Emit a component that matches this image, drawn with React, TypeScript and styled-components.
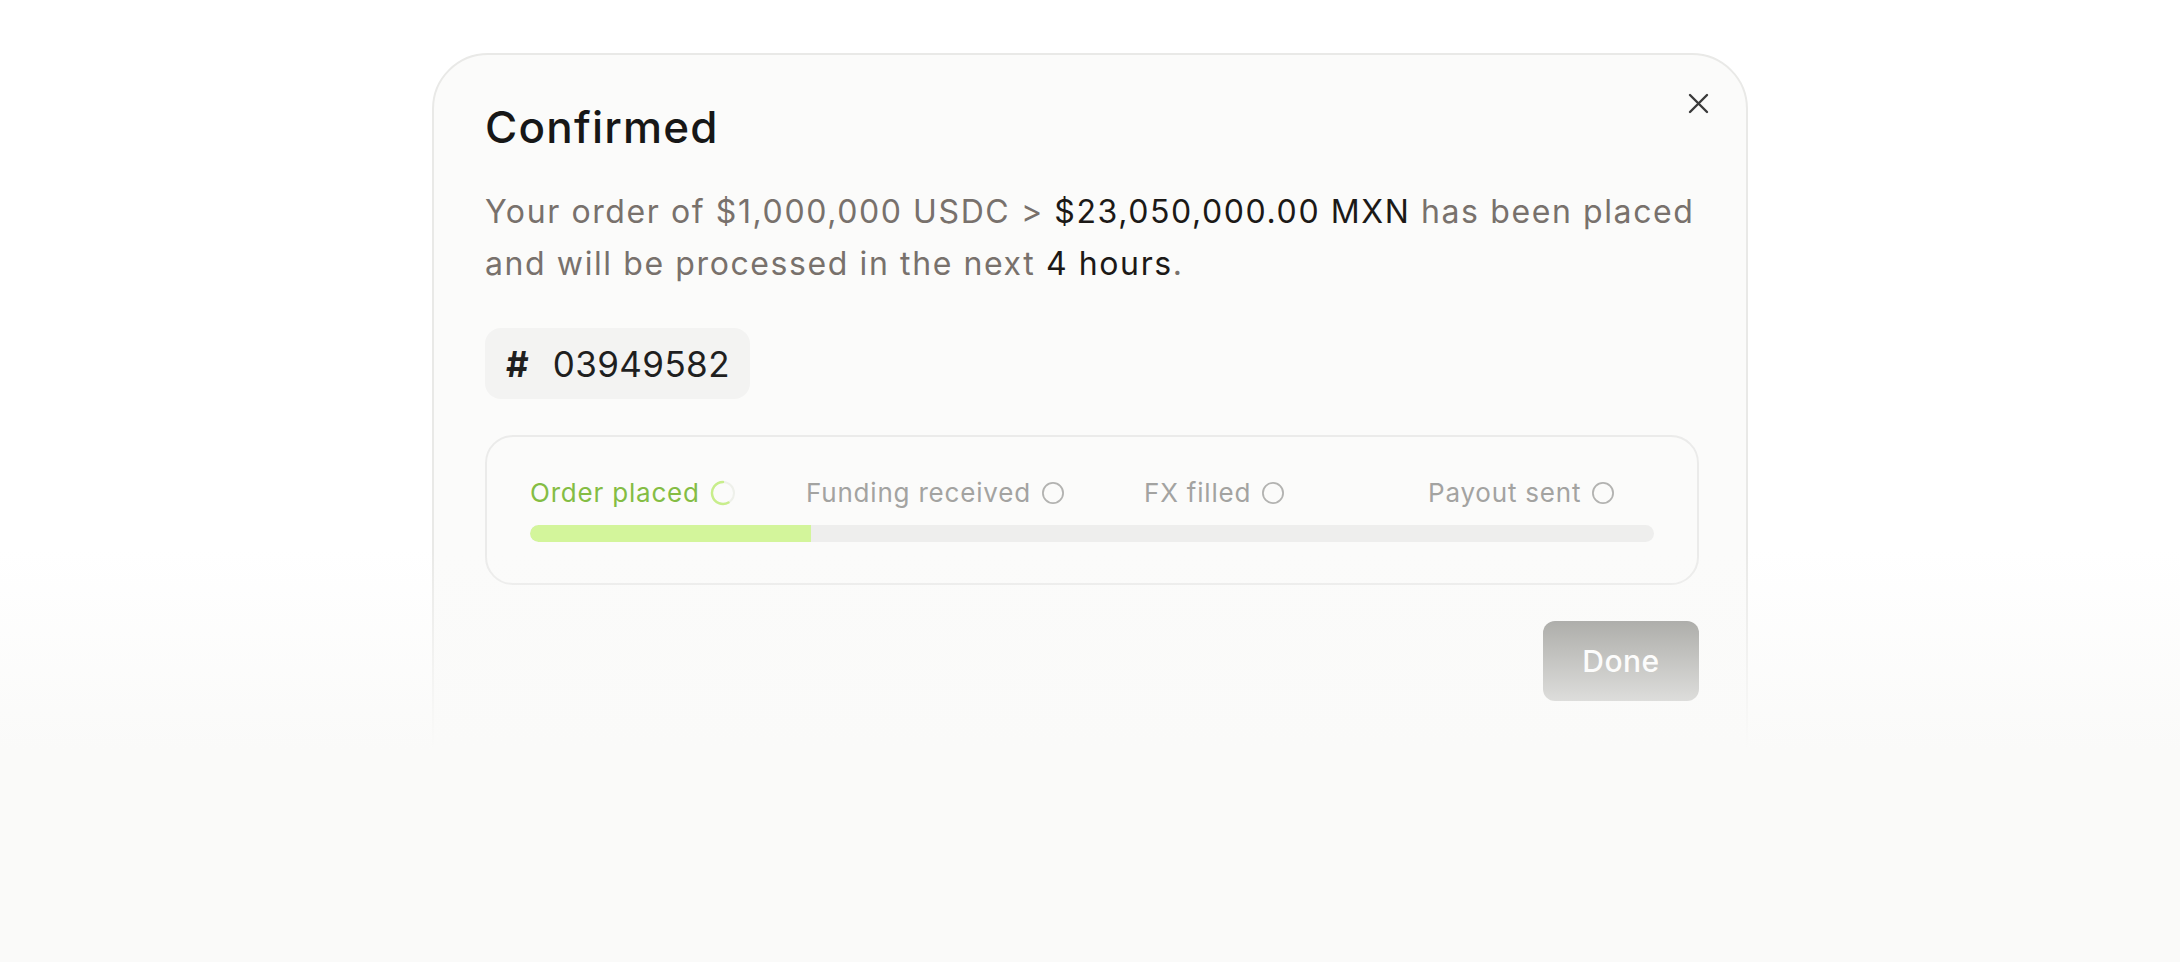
import styled, { createGlobalStyle } from "styled-components";

const GlobalStyle = createGlobalStyle`
  html, body {
    margin: 0;
    padding: 0;
    background: #ffffff;
  }
  body {
    font-family: Inter, "Noto Sans", sans-serif;
    -webkit-font-smoothing: antialiased;
  }
`;

const Page = styled.div`
  position: relative;
  height: 962px;
  overflow: hidden;
  padding-top: 53px;
  box-sizing: border-box;
`;

const Card = styled.div`
  position: relative;
  box-sizing: border-box;
  width: 1316px;
  margin: 0 auto;
  padding: 46px 47px 122px 51px;
  border: 2px solid #e9e9e7;
  border-radius: 56px;
  background: #fbfbfa;
  display: flex;
  flex-direction: column;
  gap: 36px;
`;

const CloseButton = styled.button`
  position: absolute;
  top: 38px;
  right: 37px;
  width: 21px;
  height: 21px;
  padding: 0;
  border: none;
  background: none;
  cursor: pointer;
  display: flex;
`;

const Title = styled.h1`
  margin: 0 0 -3px;
  font-size: 44px;
  line-height: 52px;
  font-weight: 500;
  color: #171717;
  letter-spacing: 1.2px;
`;

const Message = styled.p`
  margin: 0 0 2px;
  font-size: 32px;
  line-height: 52px;
  font-weight: 400;
  color: #78716c;
  letter-spacing: 1.6px;
`;

const Strong = styled.span`
  color: #1c1917;
`;

const OrderTag = styled.div`
  align-self: flex-start;
  display: inline-flex;
  align-items: center;
  gap: 24px;
  height: 71px;
  box-sizing: border-box;
  padding: 0 20px 0 21px;
  border-radius: 16px;
  background: #f3f3f2;
  color: #1f1f1f;
`;

const HashMark = styled.span`
  font-size: 35px;
  font-weight: 700;
`;

const OrderNumber = styled.span`
  font-size: 35px;
  font-weight: 400;
  letter-spacing: 0.4px;
`;

const ProgressCard = styled.div`
  box-sizing: border-box;
  height: 150px;
  padding: 38px 43px 0;
  border: 2px solid #ebebea;
  border-radius: 28px;
`;

const Steps = styled.div`
  display: grid;
  grid-template-columns: 276px 338px 284px 1fr;
`;

const Step = styled.div<{ $active?: boolean }>`
  display: flex;
  align-items: center;
  gap: 10px;
  font-size: 26px;
  line-height: 36px;
  letter-spacing: 0.8px;
  color: ${(p) => (p.$active ? "#84bd44" : "#a3a3a1")};
`;

const Track = styled.div`
  margin-top: 14px;
  height: 17px;
  border-radius: 9px;
  background: #eeeeed;
  overflow: hidden;
`;

const Fill = styled.div`
  height: 100%;
  background: #d3f59b;
  border-radius: 9px 0 0 9px;
`;

const Footer = styled.div`
  display: flex;
  justify-content: flex-end;
`;

const DoneButton = styled.button`
  width: 156px;
  height: 80px;
  border: none;
  border-radius: 12px;
  background: #84847f;
  color: #ffffff;
  font-family: Inter, "Noto Sans", sans-serif;
  font-size: 30px;
  font-weight: 500;
  letter-spacing: 0.5px;
  cursor: pointer;
`;

/* the bottom of the dialog melts into the page */
const Fade = styled.div`
  position: absolute;
  left: 0;
  right: 0;
  top: 550px;
  bottom: 0;
  pointer-events: none;
  background: linear-gradient(
    180deg,
    rgba(250, 250, 249, 0) 0px,
    #fafaf9 200px,
    #fafaf9 100%
  );
`;

function StepCircle() {
  return (
    <svg width="24" height="24" viewBox="0 0 24 24" fill="none">
      <circle cx="12" cy="12" r="10.1" stroke="#b3b3b1" strokeWidth="1.8" />
    </svg>
  );
}

function Spinner() {
  return (
    <svg width="26" height="26" viewBox="0 0 26 26" fill="none">
      <circle cx="13" cy="13" r="11" stroke="#eef0ea" strokeWidth="2" />
      <path
        d="M13 2 A11 11 0 1 0 18.5 22.53"
        stroke="#c8ee8b"
        strokeWidth="2.4"
        strokeLinecap="round"
      />
    </svg>
  );
}

const steps = [
  { label: "Order placed", active: true },
  { label: "Funding received", active: false },
  { label: "FX filled", active: false },
  { label: "Payout sent", active: false },
];

export default function App() {
  const progress = 25;
  return (
    <>
      <GlobalStyle />
      <Page>
        <Card>
          <CloseButton aria-label="Close">
            <svg width="21" height="21" viewBox="0 0 21 21" fill="none">
              <path
                d="M2 2 L19 19 M19 2 L2 19"
                stroke="#3a3a3a"
                strokeWidth="2.4"
                strokeLinecap="round"
              />
            </svg>
          </CloseButton>
          <Title>Confirmed</Title>
          <Message>
            Your order of $1,000,000 USDC &gt; <Strong>$23,050,000.00 MXN</Strong> has been
            placed and will be processed in the next <Strong>4 hours</Strong>.
          </Message>
          <OrderTag>
            <HashMark>#</HashMark>
            <OrderNumber>03949582</OrderNumber>
          </OrderTag>
          <ProgressCard>
            <Steps>
              {steps.map((s) => (
                <Step key={s.label} $active={s.active}>
                  {s.label}
                  {s.active ? <Spinner /> : <StepCircle />}
                </Step>
              ))}
            </Steps>
            <Track>
              <Fill style={{ width: `${progress}%` }} />
            </Track>
          </ProgressCard>
          <Footer>
            <DoneButton>Done</DoneButton>
          </Footer>
        </Card>
        <Fade />
      </Page>
    </>
  );
}
